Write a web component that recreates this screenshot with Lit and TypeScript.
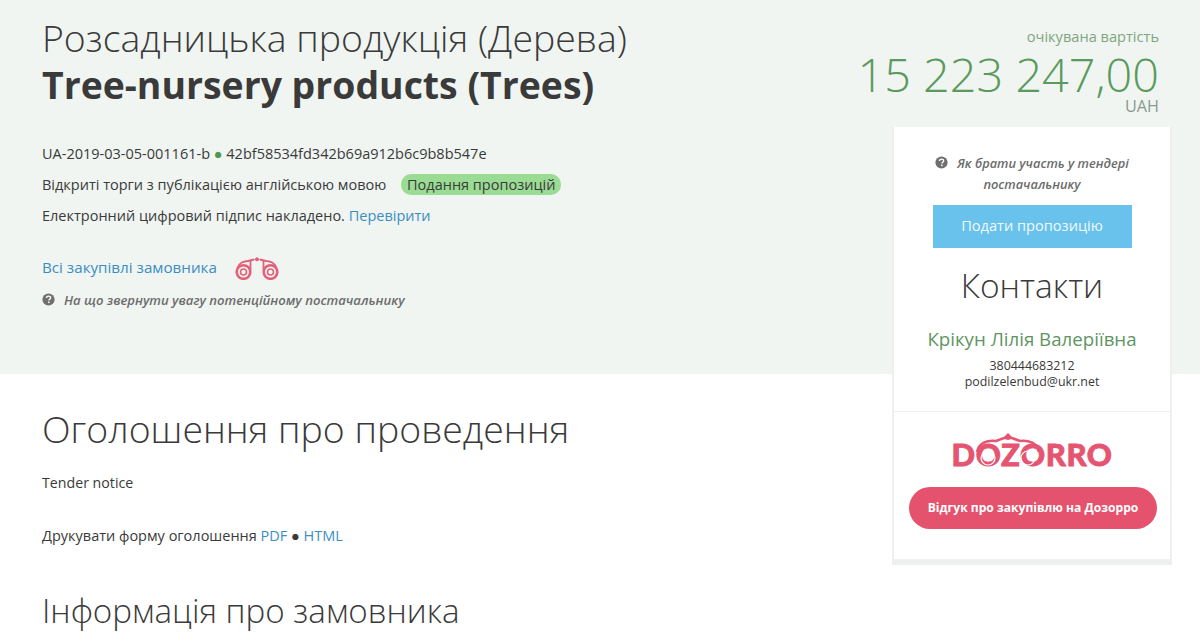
import { LitElement, html, css, svg } from 'lit';
import { customElement } from 'lit/decorators.js';

const helpIcon = html`<svg class="help" viewBox="0 0 16 16" aria-hidden="true">
	<circle cx="8" cy="8" r="7.5" fill="#6f6f6f"></circle>
	<path d="M5.5 6.2c0-1.5 1.1-2.4 2.6-2.4s2.5.9 2.5 2.1c0 1.9-2.1 1.8-2.1 3.4" fill="none" stroke="#fff" stroke-width="1.7"></path>
	<rect x="7.5" y="10.5" width="1.8" height="1.9" fill="#fff"></rect>
</svg>`;

const binoculars = svg`
	<g fill="none" stroke="#e2607a">
		<circle cx="8.5" cy="17" r="6.8" stroke-width="2.6"></circle>
		<circle cx="8.5" cy="17" r="3" stroke-width="1.6"></circle>
		<circle cx="35.5" cy="17" r="6.8" stroke-width="2.6"></circle>
		<circle cx="35.5" cy="17" r="3" stroke-width="1.6"></circle>
		<path d="M2.5 13 C4 8 9 6 13 6 L19 4.5 M41.5 13 C40 8 35 6 31 6 L25 4.5" stroke-width="2"></path>
		<path d="M15.5 15 V6 M28.5 15 V6" stroke-width="1.8"></path>
	</g>
	<path d="M19 4.5 L22 2 L25 4.5 L22 6.5 Z" fill="#e2607a"></path>
`;

@customElement('app-root')
export class AppRoot extends LitElement {
	static styles = [
		css`
			:host {
				display: block;
				position: relative;
				height: 638px;
				overflow: hidden;
				background: #fff;
				color: #3a3a3a;
				font-family: 'Open Sans', 'Noto Sans', sans-serif;
				font-size: 14.5px;
			}
			a {
				color: #3b8ec2;
				text-decoration: none;
			}
			h1,
			h2,
			p {
				margin: 0;
			}
			.hero {
				display: flex;
				justify-content: space-between;
				height: 374px;
				box-sizing: border-box;
				padding: 14px 41px 0 42px;
				background: #f0f5f2;
			}
			h1 {
				font-weight: 300;
				font-size: 37.4px;
				line-height: 47px;
				color: #3a3a3a;
				white-space: nowrap;
			}
			h1 b {
				display: block;
				font-weight: 700;
			}
			.meta {
				display: flex;
				flex-direction: column;
				gap: 12px;
				margin-top: 36px;
				line-height: 19px;
			}
			.dot {
				color: #4d9a4f;
			}
			.status {
				margin-left: 11px;
				padding: 1px 6px;
				border-radius: 10px;
				background: #9bdc94;
			}
			.buyer {
				display: flex;
				align-items: center;
				gap: 18px;
				margin-top: 30px;
				height: 24px;
				font-size: 15.2px;
				font-weight: 500;
			}
			.buyer svg {
				width: 44px;
				height: 25px;
			}
			.hint {
				font-style: italic;
				font-weight: 600;
				font-size: 13.1px;
				color: #6c6c6c;
				line-height: 21px;
			}
			.help {
				width: 13px;
				height: 13px;
				margin-right: 9px;
				vertical-align: -1px;
			}
			.hero-hint {
				margin-top: 11px;
			}
			.price {
				text-align: right;
				color: #6d9e6f;
			}
			.price small {
				display: block;
				font-size: 14.6px;
				line-height: 19px;
				margin-top: 13px;
				color: #7fa57f;
			}
			.price strong {
				display: block;
				font-weight: 300;
				font-size: 46.8px;
				line-height: 46px;
				margin-top: 5px;
				color: #5b9a5c;
			}
			.price span {
				display: block;
				font-size: 16.2px;
				line-height: 16px;
				margin-top: 1px;
				color: #8a9a8f;
			}
			.card {
				position: absolute;
				left: 892px;
				top: 127px;
				width: 280px;
				height: 438px;
				box-sizing: border-box;
				display: flex;
				flex-direction: column;
				background: #fff;
				border-left: 2px solid #eef0ef;
				border-right: 2px solid #eef0ef;
				border-bottom: 6px solid #eef0ef;
				text-align: center;
			}
			.card-top {
				height: 285px;
				box-sizing: border-box;
				padding: 26px 32px 0;
				border-bottom: 1px solid #eef0ef;
				display: flex;
				flex-direction: column;
				align-items: center;
			}
			.card-top .hint {
				width: 200px;
				font-size: 12.8px;
			}
			.apply {
				width: 199px;
				height: 43px;
				line-height: 41px;
				margin-top: 10px;
				background: #68c2ec;
				color: #f2f9fd;
				font-size: 14.6px;
				flex: none;
			}
			.card h2 {
				margin-top: 14px;
				font-size: 33.5px;
				line-height: 46px;
				font-weight: 300;
				color: #3a3a3a;
				white-space: nowrap;
			}
			.person {
				margin-top: 18px;
				font-size: 18.7px;
				line-height: 26px;
				color: #5f9563;
				white-space: nowrap;
			}
			.contact {
				margin-top: 6px;
				font-size: 12.4px;
				line-height: 16px;
			}
			.card-bottom {
				display: flex;
				flex-direction: column;
				align-items: center;
				padding-top: 16px;
			}
			.logo {
				position: relative;
				height: 46px;
				width: 170px;
				font-family: 'Lato', sans-serif;
				font-weight: 900;
				font-size: 31px;
				line-height: 52px;
				letter-spacing: 0.6px;
				color: #e55470;
				-webkit-text-stroke: 0.8px #e55470;
				white-space: nowrap;
			}
			.logo svg {
				position: absolute;
				left: 28px;
				top: 4px;
				width: 66px;
				height: 36px;
			}
			.feedback {
				width: 248px;
				height: 42px;
				line-height: 41px;
				margin: 13px 0 0 2px;
				border-radius: 21px;
				background: #e5526d;
				color: #fff;
				font-weight: 700;
				font-size: 12.1px;
				white-space: nowrap;
			}
			.notice {
				padding: 30px 42px 0;
			}
			.notice h2 {
				font-weight: 300;
				font-size: 37.4px;
				line-height: 50px;
				color: #3a3a3a;
			}
			.notice p {
				line-height: 19px;
			}
			.subtitle {
				margin-top: 19px;
				font-size: 14.2px;
			}
			.print {
				margin-top: 34px;
			}
			.notice h2.next {
				margin-top: 41px;
				font-size: 33.2px;
			}
		`
	];

	render() {
		return html`
			<section class="hero">
				<div>
					<h1>Розсадницька продукція (Дерева)<b>Tree-nursery products (Trees)</b></h1>
					<div class="meta">
						<p>UA-2019-03-05-001161-b <span class="dot">●</span> 42bf58534fd342b69a912b6c9b8b547e</p>
						<p>Відкриті торги з публікацією англійською мовою <span class="status">Подання пропозицій</span></p>
						<p>Електронний цифровий підпис накладено. <a href="#">Перевірити</a></p>
					</div>
					<div class="buyer">
						<a href="#">Всі закупівлі замовника</a>
						<svg viewBox="0 0 44 25" aria-hidden="true">${binoculars}</svg>
					</div>
					<p class="hint hero-hint">${helpIcon}На що звернути увагу потенційному постачальнику</p>
				</div>
				<div class="price">
					<small>очікувана вартість</small>
					<strong>15 223 247,00</strong>
					<span>UAH</span>
				</div>
			</section>

			<aside class="card">
				<div class="card-top">
					<p class="hint">${helpIcon}Як брати участь у тендері постачальнику</p>
					<a class="apply" href="#">Подати пропозицію</a>
					<h2>Контакти</h2>
					<div class="person">Крікун Лілія Валеріївна</div>
					<div class="contact">380444683212<br />podilzelenbud@ukr.net</div>
				</div>
				<div class="card-bottom">
					<div class="logo">
						DOZORRO
						<svg viewBox="0 0 66 36" aria-hidden="true">
							<g fill="none" stroke="#fff" stroke-width="1.2">
								<circle cx="13" cy="26" r="7"></circle>
								<circle cx="53" cy="26" r="7"></circle>
							</g>
							<path d="M2 20 C4 11 12 8 21 9 L29 6 L37 6 L45 9 C54 8 62 11 64 20" fill="none" stroke="#e55470" stroke-width="2.6"></path>
							<path d="M28 6 L33 1 L38 6 L33 8 Z" fill="#e55470"></path>
						</svg>
					</div>
					<a class="feedback" href="#">Відгук про закупівлю на Дозорро</a>
				</div>
			</aside>

			<section class="notice">
				<h2>Оголошення про проведення</h2>
				<p class="subtitle">Tender notice</p>
				<p class="print">Друкувати форму оголошення <a href="#">PDF</a> ● <a href="#">HTML</a></p>
				<h2 class="next">Інформація про замовника</h2>
			</section>
		`;
	}
}
